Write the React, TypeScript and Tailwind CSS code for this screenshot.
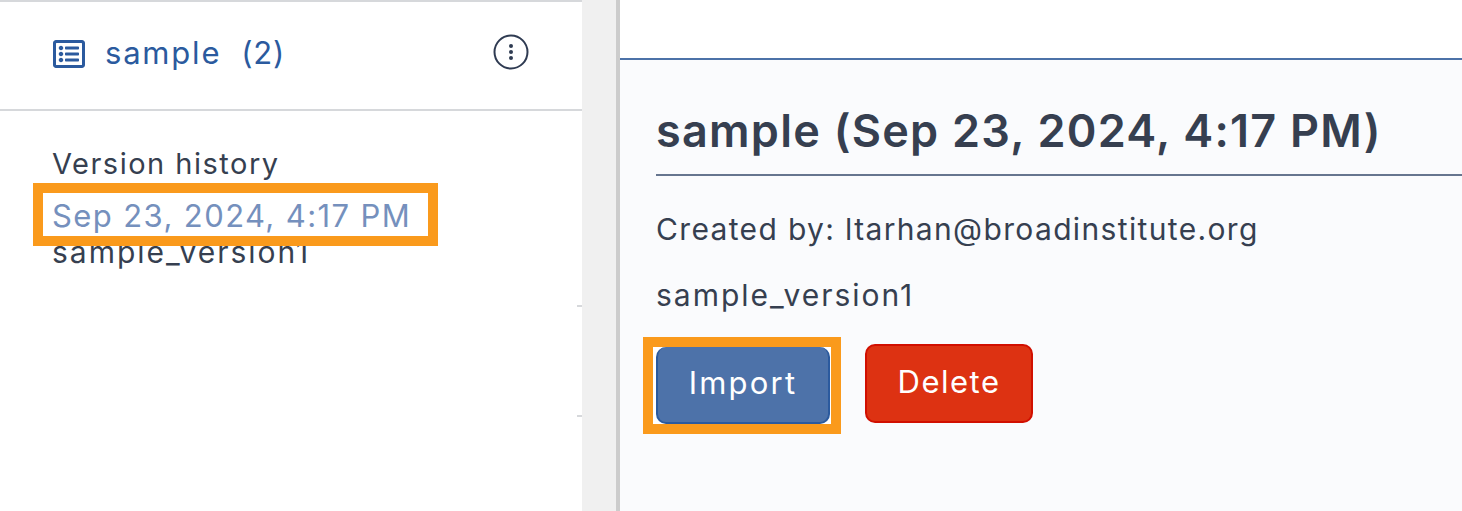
import { FaRegListAlt } from 'react-icons/fa'

const font = { fontFamily: 'Inter, "Open Sans", sans-serif' }

function MoreButton(): JSX.Element {
  return (
    <button type="button" className="mr-[53px] mt-[-8px] text-[#2f3b52]">
      <svg width="36" height="36" viewBox="0 0 36 36" fill="none">
        <circle cx="18" cy="18" r="16.5" stroke="currentColor" strokeWidth="2" />
        <circle cx="18" cy="12" r="2" fill="currentColor" />
        <circle cx="18" cy="18" r="2" fill="currentColor" />
        <circle cx="18" cy="24" r="2" fill="currentColor" />
      </svg>
    </button>
  )
}

function Sidebar(): JSX.Element {
  return (
    <aside className="relative w-[582px] shrink-0 bg-white">
      <header className="flex h-[111px] items-center border-t-2 border-b-2 border-[#d6d8db] pl-[53px]">
        <FaRegListAlt size={32} className="mt-[-4px] text-[#2b5a9e]" />
        <span className="ml-[20px] mt-[-4px] text-[31px] tracking-[1.8px] text-[#2b5a9e]">sample</span>
        <span className="ml-[20px] mt-[-4px] text-[31px] tracking-[0.7px] text-[#2b5a9e]">(2)</span>
        <div className="flex-1" />
        <MoreButton />
      </header>
      <div className="pt-[33px] text-[#363f50]">
        <div className="pl-[52px] text-[29px] leading-[40px] tracking-[1.5px]">Version history</div>
        <div className="relative z-10 ml-[43px] mt-[9px] h-[43px] w-[385px] bg-white pl-[9px] pt-[1px] text-[31px] leading-[43px] tracking-[1.4px] text-[#7590bd] outline-[10px] outline-[#fa9a1c]">
          Sep 23, 2024, 4:17 PM
        </div>
        <div className="mt-[-2px] pl-[52px] text-[30px] leading-[36px] tracking-[2px]">sample_version1</div>
      </div>
      <div className="absolute right-0 top-[305px] h-[2px] w-[5px] bg-[#d6d8db]" />
      <div className="absolute right-0 top-[415px] h-[2px] w-[5px] bg-[#d6d8db]" />
    </aside>
  )
}

function Detail(): JSX.Element {
  return (
    <main className="flex-1 border-l-4 border-[#cccccc]">
      <div className="h-[58px] bg-white" />
      <div className="h-[453px] border-t-2 border-[#4c72a8] bg-[#fafbfd] pl-[36px] text-[#363f50]">
        <h1 className="mt-[39px] border-b-2 border-[#66758f] pb-[11px] text-[45px] font-semibold leading-[64px] tracking-[1.25px] whitespace-nowrap">
          sample (Sep 23, 2024, 4:17 PM)
        </h1>
        <p className="mt-[31px] text-[30px] leading-[44px] tracking-[1.35px]">Created by: ltarhan@broadinstitute.org</p>
        <p className="mt-[22px] text-[30px] leading-[44px] tracking-[2px]">sample_version1</p>
        <div className="mt-[30px] flex items-start">
          <div className="ml-[-3px] w-[178px] bg-white pl-[3px] outline-[10px] outline-[#fa9a1c]">
            <button
              type="button"
              className="block h-[77px] w-[174px] rounded-[10px] border-2 border-t-0 border-[#2b5a9e] bg-[#4d72a9] pb-[3px] text-[31px] tracking-[2.2px] text-white"
            >
              Import
            </button>
          </div>
          <button
            type="button"
            className="ml-[34px] mt-[-3px] h-[79px] w-[168px] rounded-[10px] border-2 border-[#d10f00] bg-[#dd3212] pb-[2px] text-[31px] tracking-[1.5px] text-white"
          >
            Delete
          </button>
        </div>
      </div>
    </main>
  )
}

export default function App(): JSX.Element {
  return (
    <div className="flex h-[511px] w-[1462px] overflow-hidden bg-[#f0f0f0]" style={font}>
      <Sidebar />
      <div className="w-[34px] shrink-0 bg-[#f0f0f0]" />
      <Detail />
    </div>
  )
}
